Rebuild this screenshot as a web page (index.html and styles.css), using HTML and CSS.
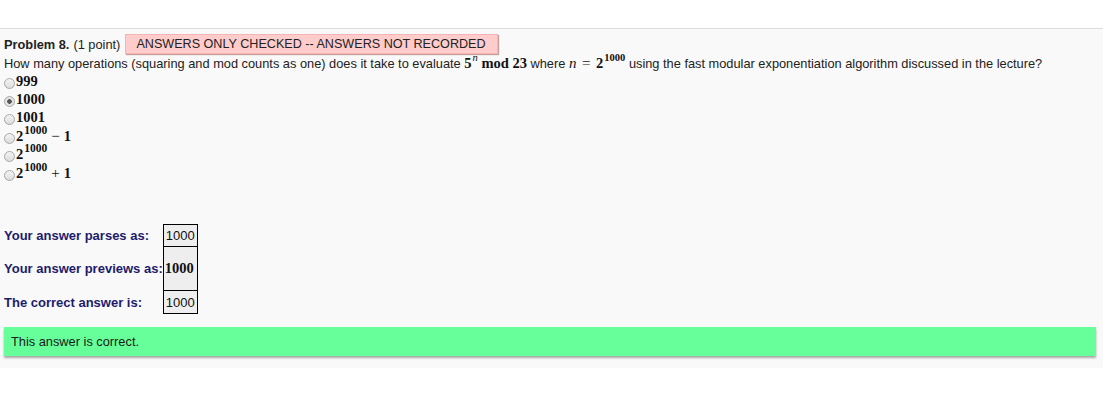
FILE: index.html
```html
<!DOCTYPE html>
<html>
<head>
<meta charset="utf-8">
<link rel="stylesheet" href="styles.css">
</head>
<body>
<div class="top"></div>
<div class="problem">
  <div class="head">
    <b>Problem 8.</b> <span class="pts">(1 point)</span>
    <span class="badge">ANSWERS ONLY CHECKED -- ANSWERS NOT RECORDED</span>
  </div>
  <div class="question">How many operations (squaring and mod counts as one) does it take to evaluate <span class="m">5<sup class="mi">n</sup> mod 23</span> where <span class="m"><i class="mi">n</i> <span class="op">=</span> 2<sup>1000</sup></span> using the fast modular exponentiation algorithm discussed in the lecture?</div>
  <div class="opts">
    <label class="opt"><input type="radio" name="a"><span class="m">999</span></label>
    <label class="opt"><input type="radio" name="a" checked><span class="m">1000</span></label>
    <label class="opt"><input type="radio" name="a"><span class="m">1001</span></label>
    <label class="opt"><input type="radio" name="a"><span class="m">2<sup>1000</sup><span class="op">&minus;</span>1</span></label>
    <label class="opt"><input type="radio" name="a"><span class="m">2<sup>1000</sup></span></label>
    <label class="opt"><input type="radio" name="a"><span class="m">2<sup>1000</sup><span class="op">+</span>1</span></label>
  </div>
  <table class="results">
    <tr class="r1"><th>Your answer parses as:</th><td>1000</td></tr>
    <tr class="r2"><th>Your answer previews as:</th><td class="m">1000</td></tr>
    <tr class="r3"><th>The correct answer is:</th><td>1000</td></tr>
  </table>
  <div class="correct">This answer is correct.</div>
</div>
</body>
</html>
```

FILE: styles.css
```css
html, body {
  margin: 0;
  padding: 0;
  background: #ffffff;
  font-family: "Liberation Sans", Arial, sans-serif;
  font-size: 12.8px;
  color: #222;
}
.top {
  height: 28px;
}
.problem {
  border-top: 1px solid #dcdcdc;
  background: #f9f9f9;
  padding: 5px 7px 10px 4px;
  height: 324px;
}
.head {
  display: flex;
  align-items: center;
  height: 20px;
  color: #222;
}
.head b {
  margin-right: 4px;
}
.pts {
  margin-right: 5px;
}
.badge {
  background: #ffcccc;
  border: 1px solid #f4b4b4;
  box-shadow: 1px 1px 1px #c8a0a0;
  font-size: 12.6px;
  color: #222;
  padding: 1px 11px 1px 10px;
  line-height: 16px;
}
.question {
  height: 18px;
  line-height: 18px;
  white-space: nowrap;
}
.m {
  font-family: "Liberation Serif", "Times New Roman", serif;
  font-weight: bold;
  font-size: 14.5px;
  color: #111;
}
.m sup {
  font-size: 11.5px;
  vertical-align: 7px;
  line-height: 0;
  margin-left: 1px;
}
.question .m sup {
  font-size: 10.5px;
}
.question .m sup.mi {
  font-style: italic;
}
.mi {
  font-style: italic;
  font-weight: normal;
  font-size: 15px;
}
.opts {
  display: flex;
  flex-direction: column;
}
.opt {
  display: flex;
  align-items: center;
  height: 18.4px;
}
.opt input {
  -webkit-appearance: none;
  appearance: none;
  width: 11px;
  height: 11px;
  border-radius: 50%;
  border: 1px solid #a8a8a8;
  background: linear-gradient(#f4f4f4, #dcdcdc);
  box-sizing: border-box;
  margin: 4px 1px 0 0;
  flex: none;
}
.opt input:checked {
  background: radial-gradient(circle, #555 0, #555 2px, #e8e8e8 2.6px, #dcdcdc 100%);
}
.op {
  font-weight: normal;
  font-size: 15px;
  margin: 0 4px 0 4px;
}
.question .op {
  margin: 0 2px;
}
.results {
  border-collapse: collapse;
  margin-top: 42px;
}
.results th {
  text-align: left;
  color: #1c1c6c;
  font-size: 13px;
  font-weight: bold;
  padding: 0 13px 0 0;
  white-space: nowrap;
}
.results td {
  border: 1px solid #000;
  background: #eeeeee;
  font-size: 13px;
  padding: 0 2px;
  color: #111;
}
.results .r2 th { padding-right: 0; }
.r1 { height: 22px; }
.r2 { height: 44px; }
.r3 { height: 23px; }
.results td.m {
  font-size: 14.5px;
  padding: 0 1px;
}
.correct {
  margin-top: 13px;
  background: #66ff99;
  box-shadow: 0 2px 2px #a8a8a8;
  height: 29px;
  line-height: 29px;
  padding-left: 7px;
  color: #1a1a1a;
}
```
